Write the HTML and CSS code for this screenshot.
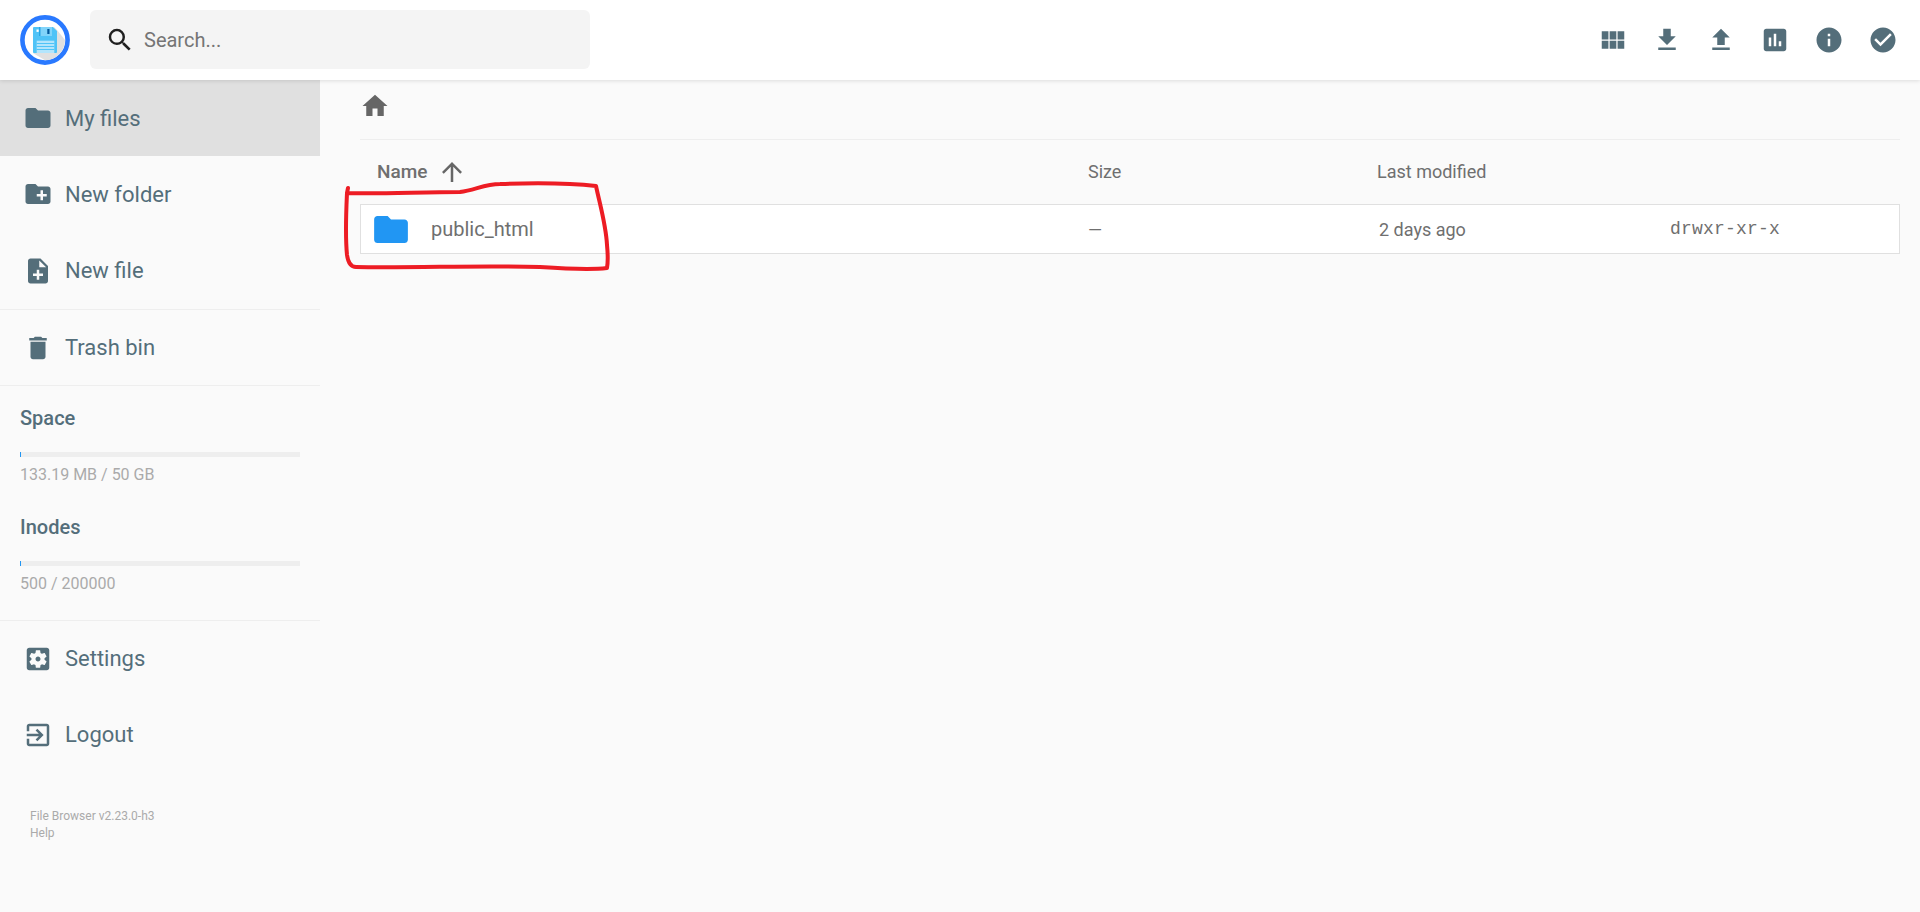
FILE: index.html
```html
<!DOCTYPE html>
<html lang="en">
<head>
<meta charset="utf-8">
<title>File Browser</title>
<link rel="stylesheet" href="styles.css">
</head>
<body>
<header class="topbar">
  <svg class="logo" viewBox="0 0 50 50" aria-hidden="true">
    <circle cx="25" cy="25" r="22.6" fill="#fff" stroke="#2979ff" stroke-width="4.6"/>
    <path d="M34 12 L37 15 L45 25 A20.300 20.300 0 0 1 25 45.300 L13 38Z" fill="#e0e0e0"/>
    <path d="M13 13a1 1 0 0 1 1-1h19l4 4v21a1 1 0 0 1-1 1H14a1 1 0 0 1-1-1z" fill="#4fc3f7"/>
    <rect x="19.500" y="12" width="1" height="9" fill="#0288d1"/>
    <rect x="20.500" y="12" width="11.500" height="9" fill="#81d4fa"/>
    <rect x="27.300" y="14" width="2.200" height="5" fill="#01579b"/>
    <rect x="16.500" y="14.500" width="2.200" height="2.400" fill="#fff"/>
    <rect x="16.700" y="25.700" width="17.600" height="12.300" fill="#b3e5fc"/>
    <path d="M16.700 28.500h17.600M16.700 31.500h17.600M16.700 34.500h17.600" stroke="#4fc3f7" stroke-width="1"/>
  </svg>
  <div class="search">
    <svg class="icon icon-search" viewBox="0 0 24 24"><path d="M15.500 14h-.79l-.28-.27A6.471 6.471 0 0 0 16 9.500 6.500 6.500 0 1 0 9.500 16c1.610 0 3.090-.59 4.230-1.570l.27.28v.79l5 4.990L20.490 19l-4.990-5zm-6 0C7.010 14 5 11.990 5 9.500S7.010 5 9.500 5 14 7.010 14 9.500 11.990 14 9.500 14z"/></svg>
    <span class="search-text">Search...</span>
  </div>
  <nav class="actions">
    <svg class="icon" viewBox="0 0 24 24"><path d="M14.670 5v6.500H9.330V5h5.340zm1 6.500H21V5h-5.330v6.500zm-1 7.500v-6.500H9.330V19h5.340zm1-6.500V19H21v-6.500h-5.330zm-7.340 0H3V19h5.330v-6.500zm0-1V5H3v6.500h5.330z"/></svg>
    <svg class="icon" viewBox="0 0 24 24"><path d="M19 9h-4V3H9v6H5l7 7 7-7zM5 18v2h14v-2H5z"/></svg>
    <svg class="icon" viewBox="0 0 24 24"><path d="M9 16h6v-6h4l-7-7-7 7h4zm-4 2h14v2H5z"/></svg>
    <svg class="icon" viewBox="0 0 24 24"><path d="M19 3H5c-1.100 0-2 .9-2 2v14c0 1.100.9 2 2 2h14c1.100 0 2-.9 2-2V5c0-1.100-.9-2-2-2zM9 17H7v-7h2v7zm4 0h-2V7h2v10zm4 0h-2v-4h2v4z"/></svg>
    <svg class="icon" viewBox="0 0 24 24"><path d="M12 2C6.480 2 2 6.480 2 12s4.480 10 10 10 10-4.480 10-10S17.520 2 12 2zm1 15h-2v-6h2v6zm0-8h-2V7h2v2z"/></svg>
    <svg class="icon" viewBox="0 0 24 24"><path d="M12 2C6.480 2 2 6.480 2 12s4.480 10 10 10 10-4.480 10-10S17.520 2 12 2zm-2 15l-5-5 1.410-1.410L10 14.170l7.590-7.590L19 8l-9 9z"/></svg>
  </nav>
</header>
<div class="layout">
  <aside class="sidebar">
    <a class="item active"><svg class="icon" viewBox="0 0 24 24"><path d="M10 4H4c-1.100 0-1.990.9-1.990 2L2 18c0 1.100.9 2 2 2h16c1.100 0 2-.9 2-2V8c0-1.100-.9-2-2-2h-8l-2-2z"/></svg><span>My files</span></a>
    <a class="item"><svg class="icon" viewBox="0 0 24 24"><path d="M20 6h-8l-2-2H4c-1.110 0-1.990.89-1.990 2L2 18c0 1.110.89 2 2 2h16c1.110 0 2-.89 2-2V8c0-1.110-.89-2-2-2zm-1 8h-3v3h-2v-3h-3v-2h3V9h2v3h3v2z"/></svg><span>New folder</span></a>
    <a class="item"><svg class="icon" viewBox="0 0 24 24"><path d="M14 2H6c-1.100 0-1.990.9-1.990 2L4 20c0 1.100.89 2 1.990 2H18c1.100 0 2-.9 2-2V8l-6-6zm2 14h-3v3h-2v-3H8v-2h3v-3h2v3h3v2zm-3-7V3.500L18.500 9H13z"/></svg><span>New file</span></a>
    <a class="item ruled"><svg class="icon" viewBox="0 0 24 24"><path d="M6 19c0 1.100.9 2 2 2h8c1.100 0 2-.9 2-2V7H6v12zM19 4h-3.500l-1-1h-5l-1 1H5v2h14V4z"/></svg><span>Trash bin</span></a>
    <section class="usage">
      <h3 class="usage-title">Space</h3>
      <div class="bar"><div class="bar-fill"></div></div>
      <p class="usage-value">133.19 MB / 50 GB</p>
      <h3 class="usage-title second">Inodes</h3>
      <div class="bar"><div class="bar-fill"></div></div>
      <p class="usage-value">500 / 200000</p>
    </section>
    <a class="item ruled"><svg class="icon" viewBox="0 0 24 24"><path d="M12 10c-1.100 0-2 .9-2 2s.9 2 2 2 2-.9 2-2-.9-2-2-2zm7-7H5c-1.110 0-2 .9-2 2v14c0 1.100.89 2 2 2h14c1.110 0 2-.9 2-2V5c0-1.100-.89-2-2-2zm-1.750 9c0 .23-.02.46-.05.68l1.480 1.160c.13.11.17.3.08.45l-1.400 2.420c-.09.15-.27.21-.43.15l-1.740-.7c-.36.28-.76.51-1.180.69l-.26 1.850c-.03.17-.18.3-.35.3h-2.800c-.17 0-.32-.13-.35-.29l-.26-1.850c-.43-.18-.82-.41-1.180-.69l-1.740.7c-.16.06-.34 0-.43-.15l-1.400-2.420c-.09-.15-.05-.34.08-.45l1.480-1.160c-.03-.23-.05-.46-.05-.69 0-.23.02-.46.05-.68l-1.480-1.160c-.13-.11-.17-.3-.08-.45l1.400-2.420c.09-.15.27-.21.43-.15l1.740.7c.36-.28.76-.51 1.180-.69l.26-1.850c.03-.17.18-.3.35-.3h2.800c.17 0 .32.13.35.29l.26 1.850c.43.18.82.41 1.180.69l1.740-.7c.16-.06.34 0 .43.15l1.400 2.420c.09.15.05.34-.08.45l-1.480 1.160c.03.23.05.46.05.69z"/></svg><span>Settings</span></a>
    <a class="item"><svg class="icon" viewBox="0 0 24 24"><path d="M10.090 15.590L11.500 17l5-5-5-5-1.410 1.410L12.670 11H3v2h9.670l-2.580 2.590zM19 3H5c-1.110 0-2 .9-2 2v4h2V5h14v14H5v-4H3v4c0 1.100.89 2 2 2h14c1.100 0 2-.9 2-2V5c0-1.100-.9-2-2-2z"/></svg><span>Logout</span></a>
    <footer class="credits">
      <div>File Browser v2.23.0-h3</div>
      <div>Help</div>
    </footer>
  </aside>
  <main class="content">
    <div class="crumbs">
      <svg class="icon icon-home" viewBox="0 0 24 24"><path d="M10 20v-6h4v6h5v-8h3L12 3 2 12h3v8z"/></svg>
    </div>
    <div class="row-head">
      <div class="col-name head-name"><span>Name</span><svg class="icon icon-arrow" viewBox="0 0 24 24"><path d="M4 12l1.410 1.410L11 7.830V20h2V7.830l5.580 5.590L20 12l-8-8-8 8z"/></svg></div>
      <div class="col-size">Size</div>
      <div class="col-date">Last modified</div>
    </div>
    <div class="row-file">
      <div class="col-name file-name"><svg class="icon-folder" viewBox="2 4 20 16"><path d="M10 4H4c-1.100 0-1.990.9-1.990 2L2 18c0 1.100.9 2 2 2h16c1.100 0 2-.9 2-2V8c0-1.100-.9-2-2-2h-8l-2-2z"/></svg><span>public_html</span></div>
      <div class="col-size">—</div>
      <div class="col-date date-value">2 days ago</div>
      <div class="col-mode">drwxr-xr-x</div>
    </div>
  </main>
</div>
<svg class="scribble" viewBox="0 0 1920 912" aria-hidden="true">
  <path d="M348 188 L347 193 C380 194 420 192 460 192 C475 190 485 184 500 184 C530 183 570 183 596 186 C600 205 606 225 607 245 C608 255 608 262 607 268 C590 270 570 269 540 267 C480 265 420 268 356 267 C350 267 348 262 347 255 C345 235 346 215 347 193" fill="none" stroke="#ed1c24" stroke-width="4" stroke-linecap="round" stroke-linejoin="round"/>
</svg>
</body>
</html>
```

FILE: styles.css
```css
* { box-sizing: border-box; }
html, body { height: 100%; }
body {
  margin: 0;
  background: #fafafa;
  font-family: Roboto, "Liberation Sans", sans-serif;
  color: #6f6f6f;
  overflow: hidden;
}
.icon { width: 30px; height: 30px; fill: #546e7a; flex: none; display: block; }

.topbar {
  position: relative;
  z-index: 2;
  height: 80px;
  background: #fff;
  box-shadow: 0 1px 4px rgba(0,0,0,.12);
  display: flex;
  align-items: center;
  padding-left: 20px;
}
.logo { width: 50px; height: 50px; flex: none; }
.search {
  margin: 0 0 1px 20px;
  width: 500px;
  height: 59px;
  background: #f4f4f4;
  border-radius: 6px;
  display: flex;
  align-items: center;
  padding-left: 15px;
}
.icon-search { fill: #1f1f1f; }
.search-text { margin-left: 9px; font-size: 20px; color: #757575; }
.actions { margin-left: auto; display: flex; gap: 24px; padding-right: 22px; }

.layout { display: flex; height: 832px; }
.sidebar { width: 320px; flex: none; }
.item {
  height: 76.3px;
  display: flex;
  align-items: center;
  padding-left: 23px;
  font-size: 22px;
  color: #546e7a;
}
.item span { margin-left: 12px; }
.item.active { background: #e0e0e0; }
.item.ruled { border-top: 1px solid #eee; }
.usage { padding: 20px 20px 0; height: 235px; border-top: 1px solid #eee; }
.usage-title { margin: 0; font-size: 20px; font-weight: 500; line-height: 24px; color: #546e7a; }
.usage-title.second { margin-top: 30px; }
.bar { height: 5px; margin-top: 22px; background: #eee; }
.bar-fill { width: 1px; height: 100%; background: #2196f3; }
.usage-value { margin: 8px 0 0; font-size: 16px; line-height: 20px; color: #aaa; }
.credits { padding: 35px 0 0 30px; font-size: 12px; line-height: 17px; color: #aaa; }

.content { flex: 1; padding: 0 20px 0 40px; }
.crumbs { height: 60px; display: flex; align-items: center; padding-bottom: 7px; border-bottom: 1px solid #eee; }
.icon-home { fill: #666; }
.row-head { height: 64px; display: flex; align-items: center; padding-bottom: 2px; font-size: 18px; }
.row-file {
  height: 50px;
  display: flex;
  align-items: center;
  background: #fff;
  border: 1px solid #e0e0e0;
  font-size: 18px;
}
.col-name { width: 728px; display: flex; align-items: center; flex: none; }
.col-size { width: 289px; flex: none; }
.col-date { width: 290px; flex: none; }
.col-mode { font-family: "Liberation Mono", monospace; font-size: 18px; letter-spacing: .2px; }
.head-name { padding-left: 17px; font-size: 19px; font-weight: 500; margin-top: 1px; }
.icon-arrow { fill: #666; margin-left: 10px; }
.file-name { width: 727px; padding-left: 13px; }
.file-name span { margin-left: 23px; font-size: 20px; }
.icon-folder { width: 34px; height: 27px; fill: #2196f3; flex: none; }
.date-value { width: 293px; padding-left: 2px; }

.scribble { position: absolute; left: 0; top: 0; width: 1920px; height: 912px; z-index: 3; pointer-events: none; }
```
